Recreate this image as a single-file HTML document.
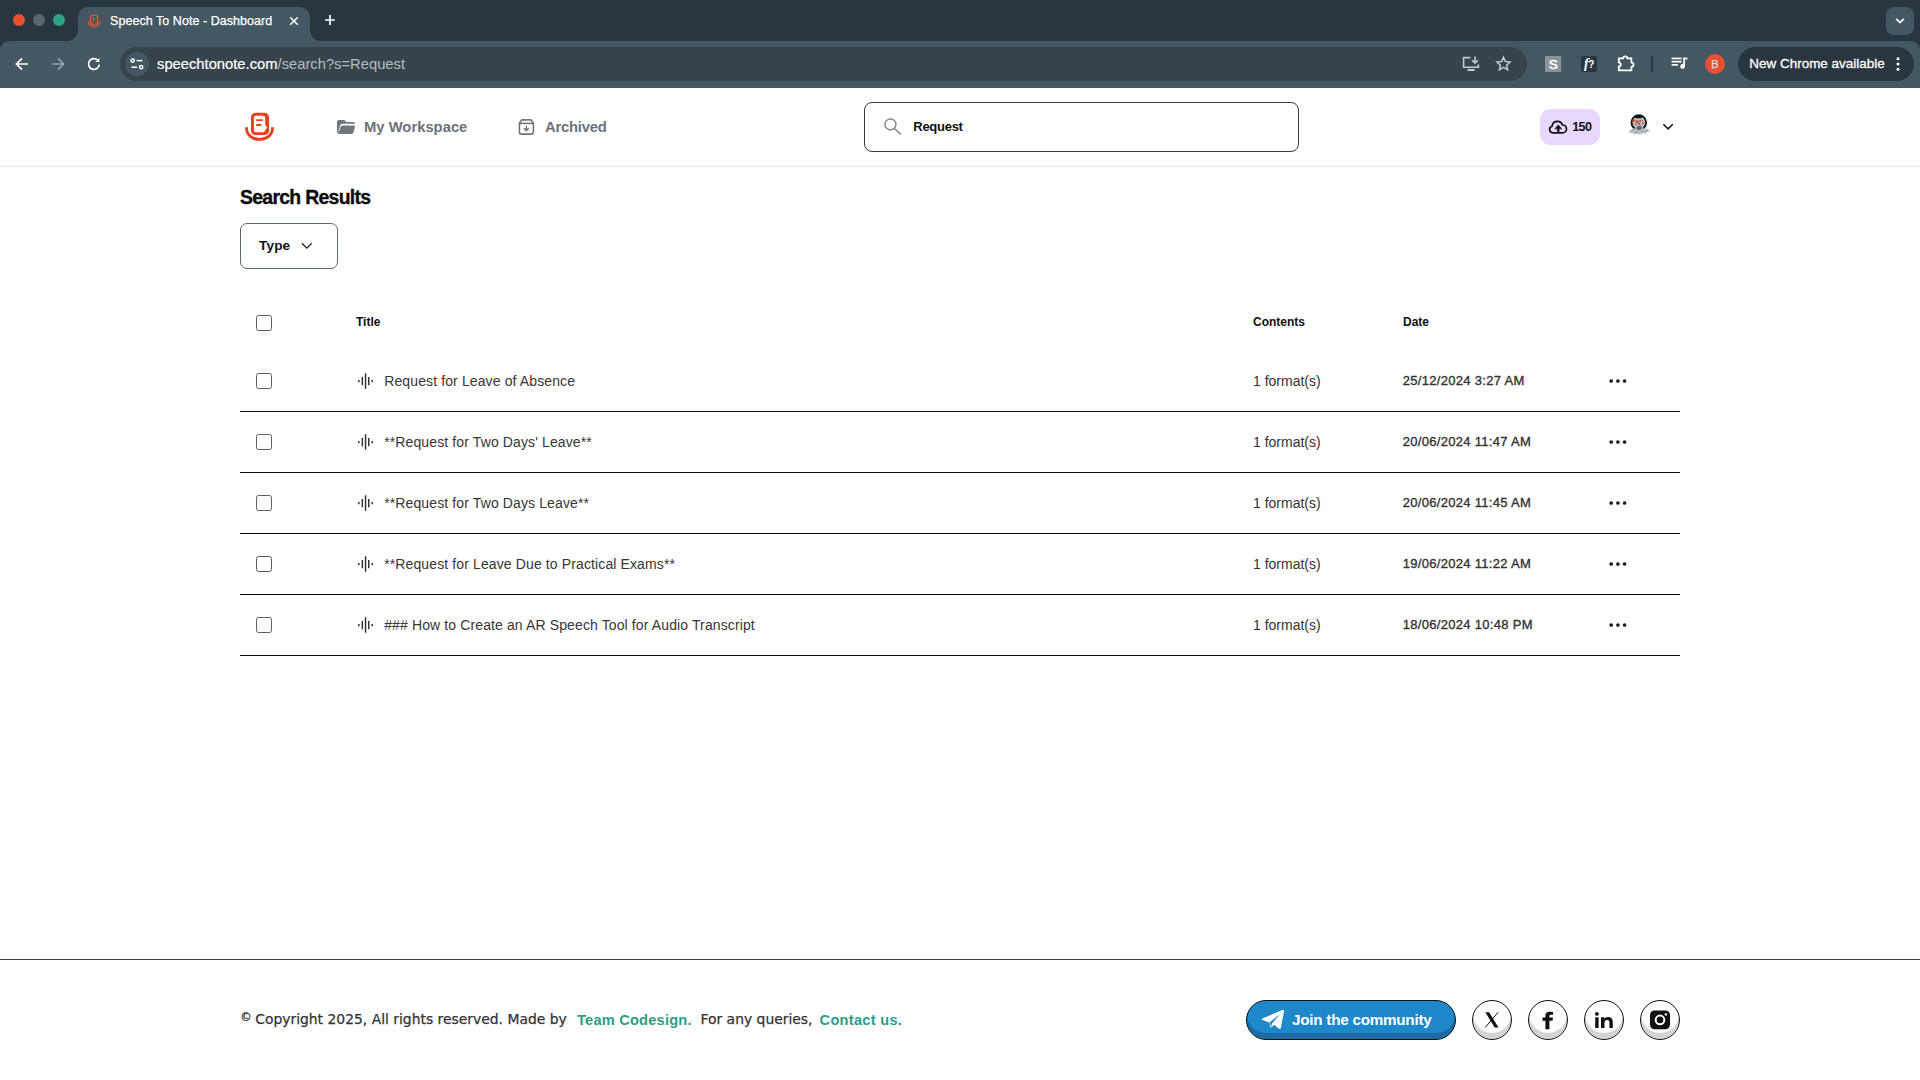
<!DOCTYPE html>
<html lang="en">
<head>
<meta charset="utf-8">
<title>Speech To Note - Dashboard</title>
<style>
*{box-sizing:border-box;margin:0;padding:0}
html,body{width:1920px;height:1080px;overflow:hidden;background:#fff}
body{font-family:"Liberation Sans",sans-serif;color:#111;position:relative}
.abs{position:absolute}
.t{position:absolute;white-space:nowrap;line-height:1}
/* ---------- browser chrome ---------- */
#tabstrip{left:0;top:0;width:1920px;height:52px;background:#2a363f}
#toolbar{left:0;top:41px;width:1920px;height:47px;background:#445863;border-radius:9px 9px 0 0}
#tab{left:78px;top:7px;width:232px;height:34px;background:#445863;border-radius:10px 10px 0 0}
#tab:before,#tab:after{content:"";position:absolute;bottom:0;width:10px;height:10px}
#tab:before{left:-10px;background:radial-gradient(circle at 0 0,transparent 9.5px,#445863 10px)}
#tab:after{right:-10px;background:radial-gradient(circle at 100% 0,transparent 9.5px,#445863 10px)}
.dot{position:absolute;top:14px;width:12px;height:12px;border-radius:50%}
#omni{left:120px;top:47px;width:1407px;height:34px;border-radius:17px;background:#37444c}
#siteinfo{left:125px;top:52px;width:24px;height:24px;border-radius:50%;background:#445863}
#newchrome{left:1738px;top:47px;width:176px;height:34px;border-radius:17px;background:#2a363f}
#tabsearch{left:1886px;top:7px;width:28px;height:28px;border-radius:8px;background:#445863}
.chrometxt{color:#fff}
/* ---------- page ---------- */
.geo{font-family:"Liberation Sans",sans-serif}
#hdrline{left:0;top:166px;width:1920px;height:1px;background:#e8eaea}
#search{left:864px;top:102px;width:435px;height:50px;border:1px solid #3a3a3a;border-radius:8px;background:#fff}
#badge{left:1540px;top:109px;width:60px;height:36px;border-radius:11px;background:#e9d8fd}
#typebtn{left:240px;top:223px;width:98px;height:46px;border:1px solid #5d6870;border-radius:7px;background:#fff}
.cb{position:absolute;left:256px;width:16px;height:16px;border:1px solid #5a6166;border-radius:2.500px;background:#fff}
.rowline{position:absolute;left:240px;width:1440px;height:1px;background:#0a0a0a}
.title{font-size:14px;color:#363636;left:384.200px;letter-spacing:.12px}
.fmt{font-size:14px;color:#333;left:1253px}
.date{font-size:13px;color:#333;left:1402.800px;letter-spacing:.3px;-webkit-text-stroke:.35px #333}
.th{font-size:12px;font-weight:bold;color:#111}
.dots{position:absolute;left:1609.200px;width:18px;height:4px}
.dots i{position:absolute;top:0;width:4px;height:4px;border-radius:50%;background:#222}
.wave{position:absolute;left:357px;width:17px;height:16px}
#ftline{left:0;top:959px;width:1920px;height:1px;background:#404040}
.ft{font-size:13.900px;color:#333;-webkit-text-stroke:.25px #333}
.dj{font-family:"DejaVu Sans","Liberation Sans",sans-serif}
.green{color:#2e9e83;font-weight:bold}
#join{left:1246px;top:1000px;width:210px;height:40px;border-radius:20px;border:1px solid #111;background:#1e88cb;box-shadow:inset 0 -6px 0 #1b6ca5}
.soc{position:absolute;top:1000px;width:40px;height:40px;border-radius:50%;border:1px solid #111;background:#fff;box-shadow:inset 0 -6px 0 #d2d4d6}
</style>
</head>
<body>
<!-- ================= BROWSER CHROME ================= -->
<div id="tabstrip" class="abs"></div>
<div id="toolbar" class="abs"></div>
<div id="tab" class="abs"></div>
<div class="dot" style="left:13px;background:#e8502f"></div>
<div class="dot" style="left:33px;background:#5a6770"></div>
<div class="dot" style="left:53px;background:#2fa184"></div>
<svg class="abs" style="left:86px;top:13px" width="16" height="16" viewBox="0 0 16 16" fill="none" stroke="#f2522a" stroke-width="1.3" stroke-linecap="round"><rect x="4.6" y="2.4" width="7" height="9" rx="2.4"/><path d="M2.4 8.6a5.7 5 0 0 0 11.4 0"/><path d="M7 5.6h1M7 7.6h1" stroke-width="1.1"/></svg>
<div id="tabtitle" class="t chrometxt" style="left:110px;top:14.8px;font-size:12.5px;letter-spacing:.05px;-webkit-text-stroke:.25px #fff">Speech To Note - Dashboard</div>
<svg class="abs" style="left:288px;top:15px" width="12" height="12" viewBox="0 0 12 12" stroke="#fff" stroke-width="1.5" fill="none"><path d="M2.2 2.2l7.6 7.6M9.8 2.2l-7.6 7.6"/></svg>
<svg class="abs" style="left:323px;top:13px" width="14" height="14" viewBox="0 0 14 14" stroke="#fff" stroke-width="1.7" fill="none"><path d="M7 2.100v9.800M2.100 7h9.800"/></svg>
<!-- nav buttons -->
<svg class="abs" style="left:14px;top:56px" width="16" height="16" viewBox="0 0 16 16" stroke="#fff" stroke-width="1.7" fill="none" stroke-linejoin="miter"><path d="M14 8H2.6M8 2.4L2.4 8 8 13.6"/></svg>
<svg class="abs" style="left:50px;top:56px" width="16" height="16" viewBox="0 0 16 16" stroke="#97a2a9" stroke-width="1.7" fill="none"><path d="M2 8h11.4M8 2.4L13.6 8 8 13.6"/></svg>
<svg class="abs" style="left:86px;top:56px" width="16" height="16" viewBox="0 0 16 16" stroke="#fff" stroke-width="1.7" fill="none"><path d="M13.3 8.6A5.4 5.4 0 1 1 11.6 4"/><path d="M13.4 1.8v4.2H9.2z" fill="#fff" stroke="none"/></svg>
<div id="omni" class="abs"></div>
<div id="siteinfo" class="abs"></div>
<svg class="abs" style="left:129px;top:56px" width="16" height="16" viewBox="0 0 16 16" stroke="#fff" stroke-width="1.5" fill="none"><circle cx="3.6" cy="4.6" r="1.6"/><path d="M7.6 4.6h5.8"/><circle cx="12.2" cy="11.2" r="1.6"/><path d="M2.4 11.2h5.8"/></svg>
<div id="url" class="t" style="left:157px;top:57px;font-size:14.75px;color:#fff;-webkit-text-stroke:.2px #fff">speechtonote.com<span style="color:#b4bcc1;-webkit-text-stroke:0">/search?s=Request</span></div>
<!-- install + star -->
<svg class="abs" style="left:1462px;top:55px" width="18" height="17" viewBox="0 0 18 17" stroke="#c3c9cd" stroke-width="1.6" fill="none"><path d="M8.4 2.6H1.6v9.6h14.8V9.6"/><path d="M5.6 15h7" stroke-width="2"/><path d="M13 1.4v6.4M10.2 5.2L13 8l2.8-2.8"/></svg>
<svg class="abs" style="left:1495px;top:55px" width="17" height="17" viewBox="0 0 17 17" stroke="#c3c9cd" stroke-width="1.5" fill="none" stroke-linejoin="miter"><path d="M8.5 2.2l1.9 4.3 4.7.5-3.5 3.2 1 4.6-4.1-2.4-4.1 2.4 1-4.6L1.9 7l4.7-.5z"/></svg>
<!-- extensions -->
<div class="abs" style="left:1545px;top:56px;width:16px;height:16px;background:#8d9499"></div>
<div class="t" style="left:1548.700px;top:57.500px;font-size:13.500px;color:#fff;-webkit-text-stroke:.5px #fff">S</div>
<div class="abs" style="left:1581px;top:56px;width:16px;height:16px;border-radius:2px;background:#2a363f"></div>
<div class="t" style="left:1584px;top:56.5px;font-family:'Liberation Serif',serif;font-style:italic;font-weight:bold;font-size:14px;color:#fff;letter-spacing:-.5px">f<span style="font-size:10px;font-style:normal;font-family:'Liberation Sans',sans-serif">?</span></div>
<svg class="abs" style="left:1616px;top:54px" width="20" height="19" viewBox="0 0 20 19" stroke="#fff" stroke-width="1.8" fill="none" stroke-linejoin="round"><path d="M2.8 4.4h4.4a2.1 2.1 0 0 1 4.2 0h4v4.2a2.1 2.1 0 0 1 0 4.2v3.6H2.8v-3.9a2 2 0 0 0 0-4z"/></svg>
<div class="abs" style="left:1651px;top:56px;width:2px;height:16px;border-radius:1px;background:#2a363f"></div>
<svg class="abs" style="left:1671px;top:56px" width="17" height="14" viewBox="0 0 17 14" fill="#fff"><rect x="0.6" y="1.6" width="10" height="1.7"/><rect x="0.6" y="4.8" width="10" height="1.7"/><rect x="0.6" y="8" width="6.4" height="1.7"/><rect x="12.2" y="1.6" width="1.7" height="9"/><rect x="12.2" y="1.6" width="4.2" height="1.9"/><circle cx="11.6" cy="10.4" r="2.3"/></svg>
<div class="abs" style="left:1705px;top:54px;width:20px;height:20px;border-radius:50%;background:#e8502f"></div>
<div class="t" style="left:1711.300px;top:58.500px;font-size:11px;color:#d3e3ea;-webkit-text-stroke:.25px #d3e3ea">B</div>
<div id="newchrome" class="abs"></div>
<div id="nctxt" class="t chrometxt" style="left:1749.3px;top:57.4px;font-size:13.4px;letter-spacing:.04px;-webkit-text-stroke:.3px #fff">New Chrome available</div>
<svg class="abs" style="left:1895px;top:56px" width="6" height="16" viewBox="0 0 6 16" fill="#fff"><circle cx="3" cy="2.8" r="1.5"/><circle cx="3" cy="8" r="1.5"/><circle cx="3" cy="13.3" r="1.5"/></svg>
<div id="tabsearch" class="abs"></div>
<svg class="abs" style="left:1894px;top:16px" width="12" height="10" viewBox="0 0 12 10" stroke="#fff" stroke-width="1.8" fill="none"><path d="M2.2 2.8L6 6.6l3.8-3.8"/></svg>

<!-- ================= PAGE HEADER ================= -->
<div id="hdrline" class="abs"></div>
<!-- logo -->
<svg class="abs" style="left:240px;top:108px" width="40" height="38" viewBox="240 108 40 38">
  <rect x="251" y="112.800" width="18.100" height="22.200" rx="4.600" fill="#e4431f"/>
  <path d="M255.700 115.700h7.600a1.800 1.800 0 0 1 1.800 1.800l.1 7.200 1.900 3.100-3.100 4.100-.7.300h-7.600a1.800 1.800 0 0 1-1.800-1.800v-12.900a1.800 1.800 0 0 1 1.800-1.800z" fill="#fff"/>
  <path d="M246.550 127.200v1.600a12.950 10.550 0 0 0 25.900 0v-1.600" fill="none" stroke="#e4431f" stroke-width="2.900"/>
  <path d="M256.200 120.100h6.600M256.200 125h5.100" stroke="#e4431f" stroke-width="1.800" fill="none"/>
</svg>
<!-- folder icon -->
<svg class="abs" style="left:336px;top:119px" width="20" height="16" viewBox="336 119 20 16" fill="#6f767c">
  <path d="M337 122.200a2.200 2.200 0 0 1 2.200-2.200h4.600c.600 0 1 .200 1.400.700l1 1.300h7.600a.900.900 0 0 1 .900.900v.800H342.600a2.700 2.700 0 0 0-2.600 2L338.500 130.800 339.500 133.900A2.400 2.400 0 0 1 337 131.500z"/>
  <path d="M343 125.600h10.400a1.500 1.500 0 0 1 1.450 1.900l-1.450 4.900a2.100 2.100 0 0 1-2 1.500H340.200a1.300 1.300 0 0 1-1.250-1.700l1.500-5.100a2.100 2.100 0 0 1 2-1.500z"/>
</svg>
<div id="nav1" class="t geo" style="left:364px;top:119.900px;font-size:14.8px;font-weight:bold;color:#6c7278">My Workspace</div>
<!-- archive icon -->
<svg class="abs" style="left:518px;top:118px" width="18" height="18" viewBox="518 118 18 18" fill="none" stroke="#6f767c" stroke-width="1.6" stroke-linejoin="round">
  <path d="M519.4 123.300l2.300-3.400h9.400l2.300 3.400v8.600a2.200 2.200 0 0 1-2.200 2.200h-9.600a2.200 2.200 0 0 1-2.200-2.200z"/>
  <path d="M519.400 123.400h14"/>
  <path d="M526.400 125.600v3" stroke-width="1.400"/>
  <path d="M522.900 128.200h7l-3.500 3.600z" fill="#6f767c" stroke="none"/>
</svg>
<div id="nav2" class="t geo" style="left:545px;top:119.900px;font-size:14.8px;font-weight:bold;color:#6c7278;letter-spacing:-.22px">Archived</div>
<div id="search" class="abs"></div>
<svg class="abs" style="left:883px;top:117px" width="20" height="19" viewBox="883 117 20 19" fill="none" stroke="#868686" stroke-width="1.400"><circle cx="890.450" cy="124.450" r="5.500"/><path d="M894.400 128.500l6.300 5.900" stroke-width="1.500"/></svg>
<div id="q" class="t geo" style="left:913.3px;top:119.8px;font-size:13px;font-weight:bold;color:#111;letter-spacing:-.28px">Request</div>
<div id="badge" class="abs"></div>
<svg class="abs" style="left:1548px;top:119px" width="20" height="16" viewBox="1548 119 20 16" fill="none" stroke="#111" stroke-width="1.700" stroke-linecap="round" stroke-linejoin="round">
  <path d="M1553 132.800a3.300 3.300 0 0 1-.900-6.500a5.300 5.300 0 0 1 10.300-1.300a3.900 3.900 0 0 1 .400 7.800z"/>
  <path d="M1558.300 132.800v-4.800" stroke-width="2.200" stroke-linecap="butt"/>
  <path d="M1555.200 128.600l3.100-3.600 3.100 3.600z" fill="#111" stroke-width=".8"/>
</svg>
<div id="b150" class="t geo" style="left:1572.200px;top:121.300px;font-size:12.600px;font-weight:bold;color:#111;letter-spacing:-.6px">150</div>
<!-- avatar -->
<svg class="abs" style="left:1626px;top:113px" width="26" height="24" viewBox="1626 113 26 24">
  <circle cx="1638.800" cy="122.600" r="7.300" fill="#b4bfc4" stroke="#15181a" stroke-width="1.900"/>
  <ellipse cx="1638.500" cy="116.900" rx="3.700" ry="1.300" fill="#0c0c0c"/>
  <path d="M1632.900 119.200h1.200l.8 1.300h4.800l.6-.7h.8v2h-8.200zM1642 119.900h1.100v1.100h-1.100zM1635 123h1.200l.9 1.700h-2.100zM1638.600 124h1.900v1h-1.900zM1641.900 122.200h1.200l1 1.800h-2.200z" fill="#ee4420"/>
  <path d="M1636.300 121.900l3.800 1.900" stroke="#333" stroke-width=".8"/>
  <ellipse cx="1639.200" cy="129.200" rx="4.600" ry="3.800" fill="#a9adb1"/>
  <ellipse cx="1639.300" cy="128" rx="2.600" ry="1.900" fill="#5d6165"/>
  <path d="M1628.400 132.600c2-3.800 4.400-4.600 6.600-3.600 2.600 1.200 5.600 1.200 8.200-.2 2.600-1.400 5.200-.6 6.600 2.200-2.400 2.200-5.600 1.400-7.600 2.800-2 1.300-4.400 1-6.400.2-2.600-.9-5-.2-7.400-1.400z" fill="#bfc3c6" opacity=".92"/>
  <path d="M1631 131.500l3-1.500M1636 132.800l2.600-2M1641 132.600l3-2.200M1645.500 131.400l2.600-1.200M1634 133.200l1.600-.8M1643.800 133.600l1.800-1.200" stroke="#70757a" stroke-width=".7"/>
</svg>
<svg class="abs" style="left:1662px;top:122px" width="13" height="9" viewBox="1662 122 13 9" fill="none" stroke="#111" stroke-width="1.500"><path d="M1663.400 124.300l4.700 4.600 4.700-4.600"/></svg>

<!-- ================= CONTENT ================= -->
<div id="h1" class="t geo" style="left:240px;top:188px;font-size:19.400px;font-weight:bold;color:#0c0c0c;letter-spacing:-.7px;-webkit-text-stroke:.35px #0c0c0c">Search Results</div>
<div id="typebtn" class="abs"></div>
<div id="typetxt" class="t geo" style="left:259px;top:239.400px;font-size:13.600px;font-weight:bold;color:#111;letter-spacing:.15px">Type</div>
<svg class="abs" style="left:300px;top:241px" width="14" height="10" viewBox="300 241 14 10" fill="none" stroke="#222" stroke-width="1.300"><path d="M301.900 243.300l4.900 4.900 4.900-4.900"/></svg>

<div class="cb" style="top:315px"></div>
<div id="thTitle" class="t th" style="left:356px;top:316px">Title</div>
<div id="thContents" class="t th" style="left:1253px;top:316px">Contents</div>
<div id="thDate" class="t th" style="left:1403px;top:316px">Date</div>

<!-- row 1 -->
<div class="cb" style="top:373px"></div>
<svg class="wave" style="top:373px" viewBox="0 0 17 16" fill="none" stroke="#2b3034" stroke-width="1.450"><path d="M1.850 6.900v2.400M5.350 4v8.200M8.550 .2v15.600M11.750 4v8.200M15.250 6.900v2.400"/></svg>
<div class="t title" id="r1t" style="top:374px">Request for Leave of Absence</div>
<div class="t fmt" id="r1f" style="top:374px">1 format(s)</div>
<div class="t date geo" id="r1d" style="top:373.5px">25/12/2024 3:27 AM</div>
<svg class="dots" style="top:379px" viewBox="0 0 18 4" fill="#1c1c1c"><circle cx="2.200" cy="2" r="1.850"/><circle cx="8.900" cy="2" r="1.850"/><circle cx="15.600" cy="2" r="1.850"/></svg>
<div class="rowline" style="top:411px"></div>

<!-- row 2 -->
<div class="cb" style="top:434px"></div>
<svg class="wave" style="top:434px" viewBox="0 0 17 16" fill="none" stroke="#2b3034" stroke-width="1.450"><path d="M1.850 6.900v2.400M5.350 4v8.200M8.550 .2v15.600M11.750 4v8.200M15.250 6.900v2.400"/></svg>
<div class="t title" id="r2t" style="top:435px">**Request for Two Days' Leave**</div>
<div class="t fmt" id="r2f" style="top:435px">1 format(s)</div>
<div class="t date geo" id="r2d" style="top:434.5px">20/06/2024 11:47 AM</div>
<svg class="dots" style="top:440px" viewBox="0 0 18 4" fill="#1c1c1c"><circle cx="2.200" cy="2" r="1.850"/><circle cx="8.900" cy="2" r="1.850"/><circle cx="15.600" cy="2" r="1.850"/></svg>
<div class="rowline" style="top:472px"></div>

<!-- row 3 -->
<div class="cb" style="top:495px"></div>
<svg class="wave" style="top:495px" viewBox="0 0 17 16" fill="none" stroke="#2b3034" stroke-width="1.450"><path d="M1.850 6.900v2.400M5.350 4v8.200M8.550 .2v15.600M11.750 4v8.200M15.250 6.900v2.400"/></svg>
<div class="t title" id="r3t" style="top:496px">**Request for Two Days Leave**</div>
<div class="t fmt" id="r3f" style="top:496px">1 format(s)</div>
<div class="t date geo" id="r3d" style="top:495.5px">20/06/2024 11:45 AM</div>
<svg class="dots" style="top:501px" viewBox="0 0 18 4" fill="#1c1c1c"><circle cx="2.200" cy="2" r="1.850"/><circle cx="8.900" cy="2" r="1.850"/><circle cx="15.600" cy="2" r="1.850"/></svg>
<div class="rowline" style="top:533px"></div>

<!-- row 4 -->
<div class="cb" style="top:556px"></div>
<svg class="wave" style="top:556px" viewBox="0 0 17 16" fill="none" stroke="#2b3034" stroke-width="1.450"><path d="M1.850 6.900v2.400M5.350 4v8.200M8.550 .2v15.600M11.750 4v8.200M15.250 6.900v2.400"/></svg>
<div class="t title" id="r4t" style="top:557px">**Request for Leave Due to Practical Exams**</div>
<div class="t fmt" id="r4f" style="top:557px">1 format(s)</div>
<div class="t date geo" id="r4d" style="top:556.5px">19/06/2024 11:22 AM</div>
<svg class="dots" style="top:562px" viewBox="0 0 18 4" fill="#1c1c1c"><circle cx="2.200" cy="2" r="1.850"/><circle cx="8.900" cy="2" r="1.850"/><circle cx="15.600" cy="2" r="1.850"/></svg>
<div class="rowline" style="top:594px"></div>

<!-- row 5 -->
<div class="cb" style="top:617px"></div>
<svg class="wave" style="top:617px" viewBox="0 0 17 16" fill="none" stroke="#2b3034" stroke-width="1.450"><path d="M1.850 6.900v2.400M5.350 4v8.200M8.550 .2v15.600M11.750 4v8.200M15.250 6.900v2.400"/></svg>
<div class="t title" id="r5t" style="top:618px">### How to Create an AR Speech Tool for Audio Transcript</div>
<div class="t fmt" id="r5f" style="top:618px">1 format(s)</div>
<div class="t date geo" id="r5d" style="top:617.5px">18/06/2024 10:48 PM</div>
<svg class="dots" style="top:623px" viewBox="0 0 18 4" fill="#1c1c1c"><circle cx="2.200" cy="2" r="1.850"/><circle cx="8.900" cy="2" r="1.850"/><circle cx="15.600" cy="2" r="1.850"/></svg>
<div class="rowline" style="top:655px"></div>

<!-- ================= FOOTER ================= -->
<div id="ftline" class="abs"></div>
<div class="t" style="left:240.200px;top:1011.600px;font-size:11.400px;color:#333;-webkit-text-stroke:.3px #333;font-family:'DejaVu Sans',sans-serif">©</div>
<div id="f1" class="t ft dj" style="left:255.200px;top:1013.200px">Copyright 2025, All rights reserved. Made by</div>
<div id="f2" class="t geo green" style="left:577px;top:1013px;font-size:14.600px;letter-spacing:.22px">Team Codesign.</div>
<div id="f3" class="t ft dj" style="left:700.500px;top:1013.200px">For any queries,</div>
<div id="f4" class="t geo green" style="left:819.600px;top:1013px;font-size:14.600px;letter-spacing:.28px">Contact us.</div>
<div id="join" class="abs"></div>
<svg class="abs" style="left:1261px;top:1009px" width="24" height="22" viewBox="1261 1009 24 22"><path d="M1262.300 1018.600l20.200-8.500c1-.4 1.700.2 1.500 1.300l-3.200 16.600c-.2 1-1 1.300-1.800.7l-5-3.900-2.600 2.600c-.4.400-.9.300-1-.3l-.9-4.700-6.900-2.300c-.9-.3-1-.1-.3-1.500z" fill="#fff"/><path d="M1269.700 1022.300l10.600-8.300-8.400 9.600-.4 3.900z" fill="#1e88cb"/></svg>
<div id="jointxt" class="t geo" style="left:1292px;top:1012.300px;font-size:15.200px;font-weight:bold;color:#fff;letter-spacing:-.22px">Join the community</div>
<div class="soc" style="left:1472px"></div>
<div class="soc" style="left:1528px"></div>
<div class="soc" style="left:1584px"></div>
<div class="soc" style="left:1640px"></div>
<!-- X -->
<svg class="abs" style="left:1484px;top:1011px" width="16" height="18" viewBox="1484 1011 16 18"><path d="M1485.300 1012.300h3.800l9.400 15.100h-3.800z" fill="#111"/><path d="M1498 1012.300l-12.700 15.100" stroke="#111" stroke-width="1" fill="none"/></svg>
<!-- facebook -->
<svg class="abs" style="left:1541px;top:1011px" width="14" height="19" viewBox="1541 1011 14 19"><path d="M1545.400 1029.300v-8.600h-2.900v-3.200h2.900v-1.900c0-2.600 1.600-3.900 3.900-3.900 1 0 2.100.1 3.800.3v2.700h-1.900c-1.300 0-1.800.5-1.800 1.700v1.100h3.600l-.5 3.200h-3.100v8.600z" fill="#111"/></svg>
<!-- linkedin -->
<svg class="abs" style="left:1594px;top:1011px" width="20" height="18" viewBox="1594 1011 20 18" fill="#111"><circle cx="1596.900" cy="1013.900" r="1.900"/><rect x="1595.200" y="1017.300" width="3.400" height="10.700"/><path d="M1601 1017.300h3.200v1.600c.7-1.200 2-1.900 3.800-1.900 3.400 0 4.800 1.900 4.800 5.300v5.700h-3.400v-5.200c0-1.700-.6-2.700-2.200-2.700-1.700 0-2.700 1.100-2.700 2.900v5h-3.500z"/></svg>
<!-- instagram -->
<svg class="abs" style="left:1649px;top:1010px" width="22" height="20" viewBox="1649 1010 22 20"><rect x="1650" y="1010.500" width="20" height="18.800" rx="4.500" fill="#111"/><circle cx="1660" cy="1019.900" r="4.300" fill="none" stroke="#fff" stroke-width="2"/><circle cx="1665.900" cy="1014.400" r="1.200" fill="#fff"/></svg>
</body>
</html>
